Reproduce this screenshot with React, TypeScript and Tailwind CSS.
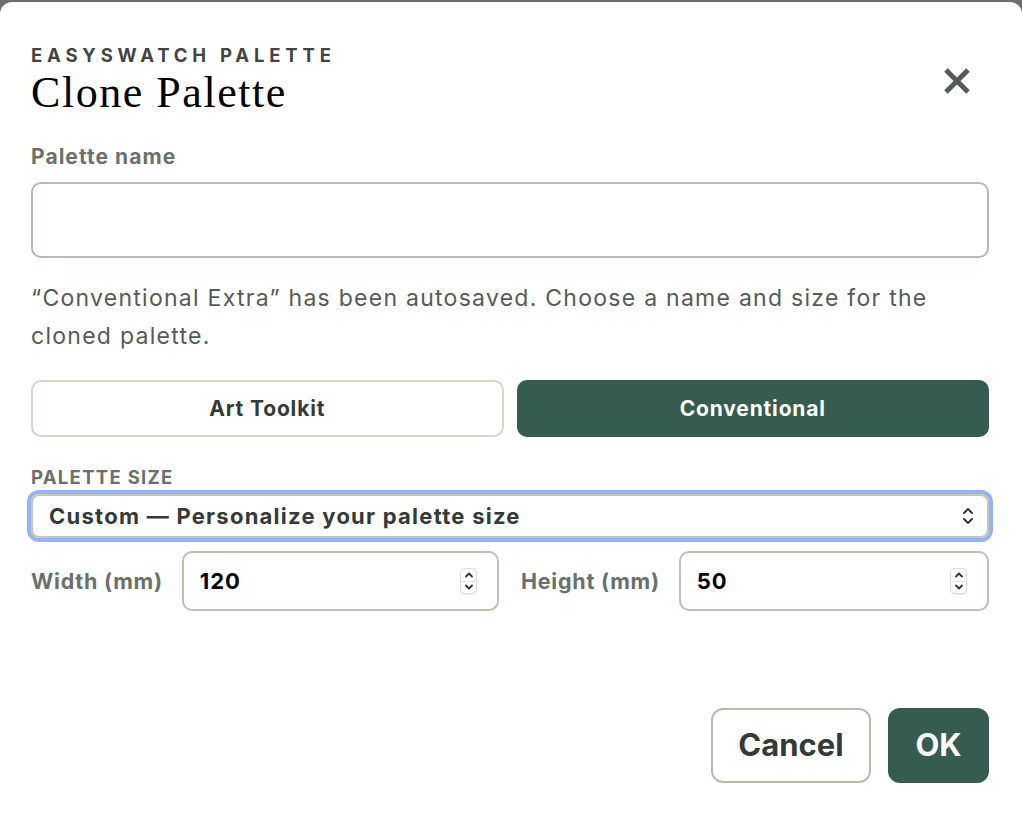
import React, { useState } from 'react'

const sans = "font-['Inter','Liberation_Sans',sans-serif]"

function Spinner() {
  return (
    <div className="flex h-[26px] w-[17px] flex-col items-center rounded-[5px] border border-[#dcdcdc] bg-white shadow-[0_1px_1px_rgba(0,0,0,0.08)]">
      <div className="flex flex-1 items-center justify-center">
        <svg width="10" height="7" viewBox="0 0 10 7" fill="none">
          <path d="M2 5.5l3-3 3 3" stroke="#333" strokeWidth="1.8" strokeLinecap="round" strokeLinejoin="round" />
        </svg>
      </div>
      <div className="h-px w-full bg-[#e2e2e2]" />
      <div className="flex flex-1 items-center justify-center">
        <svg width="10" height="7" viewBox="0 0 10 7" fill="none">
          <path d="M2 1.5l3 3 3-3" stroke="#333" strokeWidth="1.8" strokeLinecap="round" strokeLinejoin="round" />
        </svg>
      </div>
    </div>
  )
}

function NumberField({ label, value, className }: { label: string; value: string; className?: string }) {
  return (
    <div className={"flex items-center " + (className || '')}>
      <span className="text-[21.5px] font-bold tracking-[0.035em] text-[#6b706d]">{label}</span>
      <div className="ml-[19px] flex h-[60px] flex-1 items-center justify-between rounded-[10px] border-2 border-[#c3beb3] pl-[16px] pr-[20px]">
        <span className="text-[22px] font-bold tracking-[0.04em] text-black">{value}</span>
        <Spinner />
      </div>
    </div>
  )
}

function ClonePalette() {
  const [kind, setKind] = useState('conventional')

  return (
    <div className={"min-h-[816px] rounded-t-[12px] bg-white pl-[31px] pr-[33px] pt-[40px] " + sans}>
      <div className="flex items-start justify-between">
        <div>
          <div className="text-[18.5px] font-bold uppercase leading-[26px] tracking-[0.26em] text-[#444]">
            EasySwatch Palette
          </div>
          <h1 className="mt-0 font-['Georgia','Liberation_Serif',serif] text-[44px] leading-[50px] tracking-[0.035em] text-black">
            Clone Palette
          </h1>
        </div>
        <button className="mr-[18px] mt-[25px] text-[#555b58]">
          <svg width="28" height="28" viewBox="0 0 28 28">
            <path d="M3 3L25 25M25 3L3 25" stroke="currentColor" strokeWidth="5" strokeLinecap="butt" />
          </svg>
        </button>
      </div>

      <label className="mt-[24px] block text-[21px] font-bold leading-[30px] tracking-[0.05em] text-[#6b706d]">
        Palette name
      </label>
      <div className="mt-[10px] h-[76px] rounded-[10px] border-2 border-[#bdb8ad]" />

      <p className="mt-[21px] text-[23px] leading-[38px] tracking-[0.055em] text-[#555b58]">
        “Conventional Extra” has been autosaved. Choose a name and size for the cloned palette.
      </p>

      <div className="mt-[25px] grid grid-cols-2 gap-[13px]">
        <button
          onClick={() => setKind('toolkit')}
          className={
            kind === 'toolkit'
              ? 'h-[57px] rounded-[10px] bg-[#355c4f] text-[21px] font-bold tracking-[0.04em] text-white'
              : 'h-[57px] rounded-[10px] border-2 border-[#d9d4c9] text-[21px] font-bold tracking-[0.04em] text-[#333a37]'
          }
        >
          Art Toolkit
        </button>
        <button
          onClick={() => setKind('conventional')}
          className={
            kind === 'conventional'
              ? 'h-[57px] rounded-[10px] bg-[#355c4f] text-[21px] font-bold tracking-[0.04em] text-white'
              : 'h-[57px] rounded-[10px] border-2 border-[#d9d4c9] text-[21px] font-bold tracking-[0.04em] text-[#333a37]'
          }
        >
          Conventional
        </button>
      </div>

      <div className="mt-[28px] text-[18.5px] font-bold uppercase leading-[24px] tracking-[0.07em] text-[#6b706d]">
        Palette size
      </div>
      <div className="mt-[5px] flex h-[44px] items-center justify-between rounded-[8px] border-2 border-[#c9c4b9] pl-[16px] pr-[12px] shadow-[0_0_0_4px_#94b3f2]">
        <span className="text-[22px] font-bold tracking-[0.057em] text-[#333a37]">
          Custom — Personalize your palette size
        </span>
        <svg width="14" height="20" viewBox="0 0 14 20" fill="none">
          <path d="M3 7l4-4 4 4M3 13l4 4 4-4" stroke="#333a37" strokeWidth="2" strokeLinecap="round" strokeLinejoin="round" />
        </svg>
      </div>

      <div className="mt-[13px] flex gap-[22px]">
        <NumberField label="Width (mm)" value="120" className="w-[468px]" />
        <NumberField label="Height (mm)" value="50" className="flex-1" />
      </div>

      <div className="mt-[97px] flex justify-end gap-[17px]">
        <button className="h-[75px] w-[160px] rounded-[12px] border-2 border-[#bdb8ad] text-[31px] font-bold text-[#333a37]">
          Cancel
        </button>
        <button className="h-[75px] w-[101px] rounded-[12px] bg-[#355c4f] text-[31px] font-bold text-white">
          OK
        </button>
      </div>
    </div>
  )
}

export default function App() {
  return (
    <div className="min-h-screen bg-[#6e6e6e] pt-[2px]">
      <ClonePalette />
    </div>
  )
}
